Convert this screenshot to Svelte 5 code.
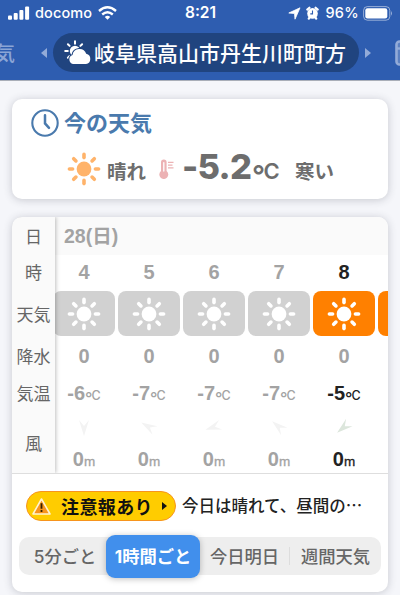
<script lang="ts">
  interface Hour {
    hour: number;
    rain: number;
    temp: number;
    wind: number;
    dir: number;
    active?: boolean;
  }

  const hours: Hour[] = [
    { hour: 4, rain: 0, temp: -6, wind: 0, dir: 180 },
    { hour: 5, rain: 0, temp: -7, wind: 0, dir: 300 },
    { hour: 6, rain: 0, temp: -7, wind: 0, dir: 252 },
    { hour: 7, rain: 0, temp: -7, wind: 0, dir: 310 },
    { hour: 8, rain: 0, temp: -5, wind: 0, dir: 230, active: true }
  ];

  const rays = [0, 45, 90, 135, 180, 225, 270, 315];
  const tabs = ['5分ごと', '1時間ごと', '今日明日', '週間天気'];
  let selected = $state(1);
</script>

{#snippet sun()}
  <svg class="sun" viewBox="0 0 34 34" fill="currentColor">
    <circle cx="17" cy="17" r="7.4" />
    {#each rays as angle}
      <rect x="15.2" y="0.6" width="3.6" height="6.8" rx="1.8" transform="rotate({angle} 17 17)" />
    {/each}
  </svg>
{/snippet}

<div class="app">
  <header>
    <div class="status">
      <div class="carrier">
        <svg width="22" height="14" viewBox="0 0 22 14" fill="#fff">
          <rect x="0" y="9.5" width="4" height="4.2" rx="1" />
          <rect x="5.7" y="7" width="4" height="6.7" rx="1" />
          <rect x="11.4" y="4" width="4" height="9.7" rx="1" />
          <rect x="17.1" y="0.5" width="4" height="13.2" rx="1" />
        </svg>
        <span class="name">docomo</span>
        <svg width="19" height="14" viewBox="0 0 19 14" fill="none" stroke="#fff" stroke-width="2.4">
          <path d="M1 5 Q9.5 -2.4 18 5" />
          <path d="M4.2 8.5 Q9.5 4 14.8 8.5" />
          <path d="M6.8 10.9 Q9.5 8.6 12.2 10.9 L9.5 13.7Z" fill="#fff" stroke="none" />
        </svg>
      </div>
      <span class="time">8:21</span>
      <div class="power">
        <svg width="13" height="13" viewBox="0 0 13 13" fill="#fff">
          <path d="M12 0.8 L7 12.2 L6.5 6.5 L0.8 6Z" stroke="#fff" stroke-width="0.8" stroke-linejoin="round" />
        </svg>
        <svg class="alarm" width="13" height="14" viewBox="0 0 13 14">
          <g fill="none" stroke="#fff" stroke-width="2.2" stroke-linecap="round">
            <path d="M1.3 3.6 L3.4 1.7 M11.7 3.6 L9.6 1.7 M2.8 12.6 L3.8 11 M10.2 12.6 L9.2 11" />
          </g>
          <circle cx="6.5" cy="7.4" r="5.3" fill="#fff" />
          <path d="M6.5 4.5 V7.9 H4.3" fill="none" stroke="#2e5db0" stroke-width="1.1" />
        </svg>
        <span class="percent">96%</span>
        <svg width="30" height="15" viewBox="0 0 30 15">
          <rect x="0.6" y="0.6" width="26.2" height="13.6" rx="3.8" fill="none" stroke="#fff" stroke-opacity="0.5" />
          <rect x="2.3" y="2.3" width="22" height="10.2" rx="2.2" fill="#fff" />
          <path d="M28 5 Q30 7.4 28 9.8Z" fill="#fff" fill-opacity="0.5" />
        </svg>
      </div>
    </div>

    <nav>
      <span class="prev-page">気</span>
      <span class="arrow left"></span>
      <div class="place">
        <svg width="28" height="25" viewBox="0 0 28 25">
          <g stroke="#fff" stroke-width="2" stroke-linecap="round">
            <path d="M11 1.2 V3.8 M3.9 4.2 L5.6 5.9 M18.1 4.2 L16.4 5.9 M1.2 11 H3.8 M3.9 17.8 L5.4 16.3" />
          </g>
          <circle cx="11" cy="11" r="5.2" fill="#fff" />
          <path
            d="M9 24 A4.7 4.7 0 0 1 8.5 15 A7.1 7.1 0 0 1 22.2 13.8 A5.2 5.2 0 0 1 22 24Z"
            fill="#fff"
            stroke="#20447f"
            stroke-width="2"
            paint-order="stroke"
          />
        </svg>
        <span>岐阜県高山市丹生川町町方</span>
      </div>
      <span class="arrow right"></span>
      <svg width="24" height="26" viewBox="0 0 24 26">
        <rect x="1.5" y="1.5" width="24" height="23" rx="3" fill="#93abd8" fill-opacity="0.45" stroke="#93abd8" stroke-width="2.6" />
        <path d="M1 8.5 H24" stroke="#93abd8" stroke-width="2.4" />
      </svg>
    </nav>
  </header>

  <main>
    <section class="card now">
      <h2>
        <svg width="28" height="28" viewBox="0 0 28 28" fill="none" stroke="#4a7aad" stroke-width="2.1">
          <circle cx="14" cy="14" r="12.7" />
          <path d="M14 6.3 V14.4 L18 18.8" stroke-width="2.5" stroke-linecap="round" />
        </svg>
        <span>今の天気</span>
      </h2>
      <div class="current">
        {@render sun()}
        <span class="condition">晴れ</span>
        <svg class="thermo" width="15" height="20" viewBox="0 0 15 20">
          <path d="M2 12 V3.3 A2.8 2.8 0 0 1 7.6 3.3 V12 A4.5 4.5 0 1 1 2 12Z" fill="#ecb2b4" />
          <path d="M4.8 3.7 V12" stroke="#fff" stroke-width="1.3" stroke-linecap="round" />
          <path d="M9 3.4 H14.5 M9 6.1 H13.5 M9 8.8 H14.5" stroke="#ecb2b4" stroke-width="1.3" />
        </svg>
        <span class="degrees">-5.2</span>
        <span class="unit"><b>°</b>C</span>
        <span class="feel">寒い</span>
      </div>
    </section>

    <section class="card forecast">
      <div class="table">
        <div class="labels">
          <span>日</span>
          <span>時</span>
          <span>天気</span>
          <span>降水</span>
          <span>気温</span>
          <span>風</span>
        </div>
        <div class="scroll">
          <div class="date">28(日)</div>
          <div class="columns">
            {#each hours as h}
              <div class="column" class:active={h.active}>
                <span class="num">{h.hour}</span>
                <div class="tile">{@render sun()}</div>
                <span class="num rain">{h.rain}</span>
                <span class="num temp">{h.temp}<small><b>°</b>C</small></span>
                <div class="wind">
                  <svg width="24" height="24" viewBox="0 0 24 24" fill="currentColor">
                    <path d="M12 3 L17 19 L12 13 L7 19Z" transform="rotate({h.dir} 12 12)" />
                  </svg>
                </div>
                <span class="num speed">{h.wind}<small>m</small></span>
              </div>
            {/each}
            <div class="column active">
              <span></span>
              <div class="tile"></div>
            </div>
          </div>
        </div>
      </div>

      <div class="notice">
        <button class="warning">
          <svg width="21" height="19" viewBox="0 0 21 19">
            <path d="M10.5 2 L19 17 H2Z" fill="#f7941d" stroke="#fff3cf" stroke-width="1.6" stroke-linejoin="round" />
            <path d="M10.5 6.3 V11.7 M10.5 13.1 V15" stroke="#332000" stroke-width="1.8" />
          </svg>
          <span>注意報あり</span>
          <i></i>
        </button>
        <p>今日は晴れて、昼間の<span class="dots">⋯</span></p>
      </div>

      <div class="tabs">
        {#each tabs as tab, i}
          <button class:selected={selected === i} onclick={() => (selected = i)}>{tab}</button>
        {/each}
      </div>
    </section>
  </main>
</div>

<style>
  :global(body) {
    margin: 0;
    background: #f5f6fa;
  }

  .app {
    height: 595px;
    overflow: hidden;
    font-family: 'Liberation Sans', 'Noto Sans CJK JP', sans-serif;
    color: #666;
  }

  button {
    border: none;
    background: none;
    padding: 0;
    margin: 0;
    font: inherit;
    color: inherit;
  }

  svg {
    display: block;
    flex-shrink: 0;
  }

  header {
    height: 81px;
    background: #2e5db0;
    color: #fff;
    border-bottom: 1px solid #a9aeb8;
    box-sizing: border-box;
  }

  .status {
    display: grid;
    grid-template-columns: 1fr auto 1fr;
    align-items: center;
    height: 26px;
    padding: 0 7px 0 8px;
    font-family: Inter, sans-serif;
    font-size: 14.5px;
    line-height: 26px;
  }

  .carrier,
  .power {
    display: flex;
    align-items: center;
  }

  .power {
    justify-content: flex-end;
  }

  .name {
    margin: 0 6px 0 5px;
    letter-spacing: 0.1px;
    font-weight: 500;
  }

  .time {
    font-weight: 600;
    font-size: 15.5px;
  }

  .alarm {
    margin: 0 6px 0 5px;
  }

  .percent {
    margin-right: 4px;
    letter-spacing: 0.3px;
    font-weight: 500;
  }

  nav {
    display: flex;
    align-items: center;
    height: 39px;
    margin-top: 7px;
    overflow: hidden;
  }

  .prev-page {
    width: 15px;
    display: flex;
    justify-content: flex-end;
    font-size: 20px;
    font-weight: 500;
    color: #8ba5d6;
  }

  .arrow {
    border: 5px solid transparent;
    flex-shrink: 0;
  }

  .arrow.left {
    border-left: none;
    border-right: 6px solid #93abd8;
    margin: 0 6px 0 26px;
  }

  .arrow.right {
    border-right: none;
    border-left: 6px solid #93abd8;
    margin: 0 24px 0 6px;
  }

  .place {
    display: flex;
    align-items: center;
    gap: 2px;
    width: 306px;
    height: 39px;
    padding: 0 0 1px 11px;
    box-sizing: border-box;
    border-radius: 20px;
    background: #20447f;
    font-size: 21px;
    font-weight: 500;
    white-space: nowrap;
    flex-shrink: 0;
  }

  main {
    display: flex;
    flex-direction: column;
    gap: 18px;
    padding: 18px 12px 0;
  }

  .card {
    background: #fff;
    border-radius: 10px;
    box-shadow: 0 1px 8px rgba(50, 55, 70, 0.24);
  }

  .now {
    height: 100px;
  }

  h2 {
    display: flex;
    align-items: center;
    gap: 5px;
    height: 30px;
    margin: 0;
    padding: 9px 0 0 19px;
    font-size: 22px;
    font-weight: 700;
    line-height: 30px;
    color: #4a7aad;
  }

  h2 span {
    margin-top: 2px;
  }

  .current {
    display: flex;
    align-items: center;
    height: 36px;
    padding: 13px 0 0 55px;
    color: #6d6d6d;
    font-weight: 700;
  }

  .current .sun {
    width: 34px;
    color: #ffb36a;
  }

  .condition,
  .feel {
    font-size: 19.5px;
    line-height: 30px;
    margin-top: 5px;
  }

  .condition {
    margin-left: 6px;
  }

  .thermo {
    margin: 0 8px 0 13px;
  }

  .degrees {
    width: 70px;
    font-family: Inter, sans-serif;
    font-size: 34.5px;
    font-weight: 800;
    line-height: 36px;
    letter-spacing: -0.7px;
    margin-top: -4px;
    white-space: nowrap;
  }

  .unit {
    width: 27px;
    font-family: Inter, sans-serif;
    font-size: 22px;
    font-weight: 600;
    line-height: 30px;
    letter-spacing: -0.6px;
    margin-top: 4px;
    white-space: nowrap;
  }

  /* the degree ring sits lower and larger than the font's own */
  .unit b,
  .temp b {
    font-size: 1.3em;
    font-weight: inherit;
    line-height: 0;
    vertical-align: -0.25em;
    letter-spacing: -0.06em;
  }

  .feel {
    margin-left: 16px;
  }

  .forecast {
    height: 375px;
    overflow: hidden;
  }

  .table {
    display: flex;
    height: 256px;
    border-bottom: 1px solid #dedede;
  }

  .labels {
    display: grid;
    grid-template-rows: 38px 34px 50px 34px 40px 60px;
    width: 43px;
    flex-shrink: 0;
    align-items: center;
    justify-items: center;
    background: #fafafa;
    font-size: 17px;
    line-height: 24px;
    font-weight: 400;
    color: #666;
    box-shadow: 1px 0 4px rgba(0, 0, 0, 0.25);
    z-index: 1;
    clip-path: inset(0 -8px 0 0);
  }

  .labels span {
    padding-top: 3px;
  }

  .scroll {
    flex: 1;
    min-width: 0;
    overflow: hidden;
  }

  .date {
    height: 38px;
    padding-left: 9px;
    background: #fafafa;
    font-size: 19.5px;
    font-weight: 700;
    line-height: 39px;
    color: #a3a3a3;
    box-sizing: border-box;
  }

  .columns {
    display: flex;
    margin-left: -3.5px;
  }

  .column {
    display: grid;
    grid-template-rows: 33px 51px 34px 41px 32px 28px;
    width: 65px;
    flex-shrink: 0;
    align-items: center;
    justify-items: center;
    color: #a3a3a3;
  }

  .column.active {
    color: #222;
  }

  .num {
    font-size: 20px;
    line-height: 24px;
    font-weight: 700;
    white-space: nowrap;
  }

  .active .rain {
    color: #a3a3a3;
  }

  .temp {
    padding-top: 1px;
  }

  .temp small {
    font-family: Inter, sans-serif;
    font-size: 12.5px;
    font-weight: 500;
  }

  .speed small {
    font-size: 13.5px;
    font-weight: 400;
    -webkit-text-stroke: 0.3px;
  }

  .tile {
    display: flex;
    align-items: center;
    justify-content: center;
    width: 62.5px;
    height: 45px;
    border-radius: 8px;
    background: #d1d1d1;
    color: #fff;
  }

  .tile .sun {
    width: 34px;
  }

  .active .tile {
    background: #ff8000;
  }

  .wind {
    color: #f3f3f3;
    margin-top: -6px;
  }

  .active .wind {
    color: #dce6dc;
  }

  .notice {
    display: flex;
    align-items: center;
    gap: 6px;
    height: 30px;
    padding: 17px 14px 0;
  }

  .warning {
    display: flex;
    align-items: center;
    width: 150px;
    height: 30px;
    padding-left: 4px;
    box-sizing: border-box;
    border: 1.5px solid #f7941d;
    border-radius: 15px;
    background: #fc0;
    color: #111;
    font-size: 18px;
    font-weight: 700;
    letter-spacing: 0.4px;
    white-space: nowrap;
    flex-shrink: 0;
  }

  .warning span {
    margin-left: 9px;
  }

  .warning i {
    margin-left: 9px;
    border: 4px solid transparent;
    border-left: 5px solid #111;
    border-right: none;
  }

  .notice p {
    margin: 0;
    font-size: 16.5px;
    line-height: 24px;
    font-weight: 500;
    color: #222;
    white-space: nowrap;
  }

  .tabs {
    display: flex;
    align-items: center;
    height: 38px;
    margin: 16px 7px 0;
    border-radius: 10px;
    background: #eee;
    font-family: Inter, 'Noto Sans CJK JP', sans-serif;
    font-size: 17.3px;
    font-weight: 500;
    color: #666;
  }

  .tabs button {
    width: 90px;
    height: 24px;
    line-height: 25px;
    white-space: nowrap;
  }

  .tabs button:first-child {
    width: 87px;
    padding-left: 5px;
    box-sizing: border-box;
  }

  .tabs button:nth-child(3) {
    width: 89px;
  }

  .tabs button:last-child {
    border-left: 1px solid #ddd;
    height: 18px;
    line-height: 19px;
    flex: 1;
  }

  .tabs .selected {
    width: 94px;
    height: 43px;
    line-height: 44px;
    border-radius: 9px;
    background: #418fec;
    color: #fff;
    font-weight: 700;
    font-size: 17.3px;
    box-shadow: 0 1px 6px rgba(0, 0, 0, 0.25);
  }
</style>
